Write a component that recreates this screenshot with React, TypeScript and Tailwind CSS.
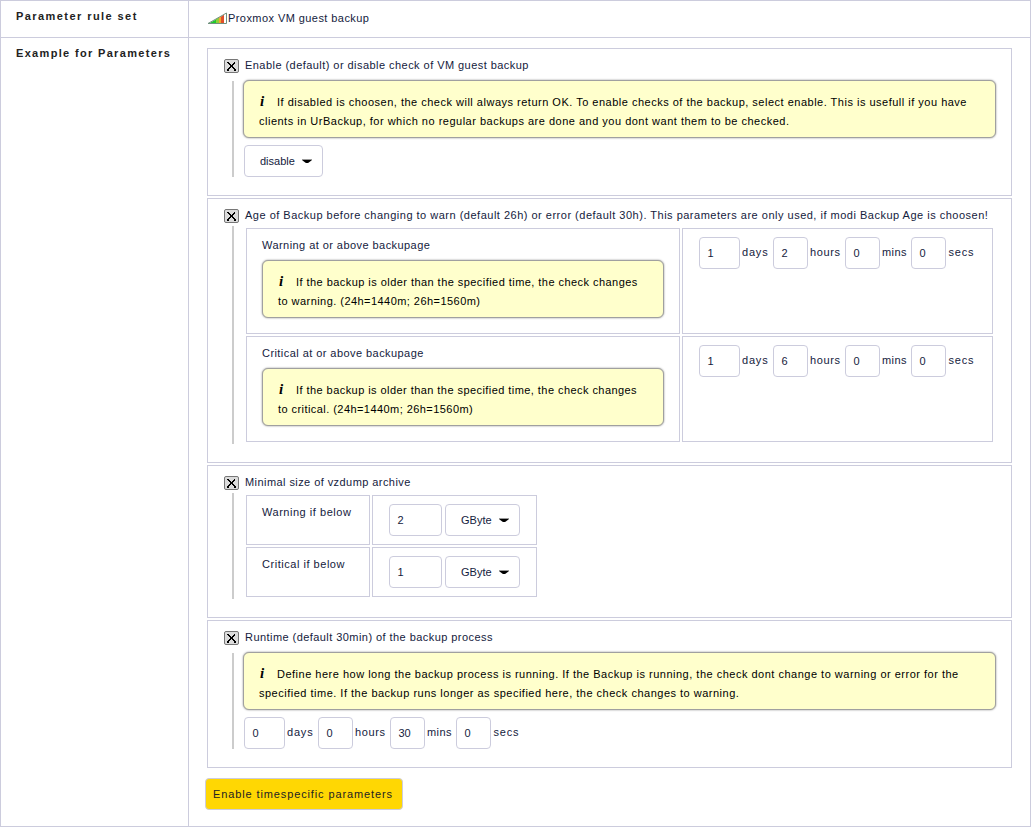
import type { ReactNode } from "react";

function Checkbox() {
  return (
    <span className="mt-[10px] flex h-[14px] w-[15px] shrink-0 items-start rounded-[2px] border border-[#777] bg-[#dcdcdc] pl-[2px] pt-[2px]">
      <svg width="9" height="9" viewBox="0 0 9 9" shapeRendering="crispEdges">
        <path d="M0 0h2v1H0zM7 0h1v1H7zM1 1h2v1H1zM6 1h2v1H6zM2 2h2v1H2zM5 2h2v1H5zM3 3h3v2H3zM2 5h2v1H2zM5 5h2v1H5zM1 6h2v1H1zM6 6h2v1H6zM0 7h2v2H0zM7 7h2v2H7z" fill="#000" />
      </svg>
    </span>
  );
}

function Group({ title, height, body, titleClass, children }: { title: string; height: string; body: string; titleClass: string; children: ReactNode }) {
  return (
    <section className={`${height} w-[805px] border border-[#ccccdd] pl-4`}>
      <div className="flex h-8 items-start">
        <Checkbox />
        <span className={`ml-[6px] mt-[8px] whitespace-nowrap leading-[16px] ${titleClass}`}>{title}</span>
      </div>
      <div className={`ml-2 flex flex-col border-l-2 border-[#cccccc] ${body}`}>{children}</div>
    </section>
  );
}

function Help({ lines, className, spacing }: { lines: [string, string]; className: string; spacing: string }) {
  return (
    <div className={`h-[58px] rounded-[6px] border border-[#a0a0a0] bg-[#ffffcc] pl-[15px] pt-[12px] text-black shadow-[0_0_2px_#888] ${className}`}>
      <div className="flex h-[19px] whitespace-nowrap leading-[19px]">
        <i className="w-[18px] shrink-0 pl-px font-['Liberation_Serif',serif] text-[15px] font-bold leading-[16px]">i</i>
        <span className={spacing}>{lines[0]}</span>
      </div>
      <div className={`h-[19px] whitespace-nowrap leading-[19px] ${spacing}`}>{lines[1]}</div>
    </div>
  );
}

function Field({ value, width }: { value: string; width: string }) {
  return <span className={`flex h-8 shrink-0 items-center rounded-[4px] border border-[#ccccdd] pl-[7.5px] tracking-normal ${width}`}>{value}</span>;
}

function Select({ value, width }: { value: string; width: string }) {
  return (
    <span className={`flex h-8 shrink-0 items-center justify-between rounded-[4px] border border-[#ccccdd] pl-[15px] pr-[9px] tracking-normal ${width}`}>
      {value}
      <svg width="12" height="5" viewBox="0 0 12 5">
        <path d="M1 0h10v1H1z" fill="#999" />
        <path d="M1 1h10L7.5 3.7Q6 4.5 4.5 3.7z" fill="#000" />
      </svg>
    </span>
  );
}

function Duration({ values }: { values: [string, string, string, string] }) {
  return (
    <div className="flex h-8 leading-[14px] tracking-[0.8px]">
      <Field value={values[0]} width="w-[41px]" />
      <span className="ml-[2px] w-[31px] pt-[8px]">days</span>
      <Field value={values[1]} width="w-[35px]" />
      <span className="ml-[2px] w-[35px] pt-[8px] tracking-[0.6px]">hours</span>
      <Field value={values[2]} width="w-[35px]" />
      <span className="ml-[2px] w-[29px] pt-[8px] tracking-[0.4px]">mins</span>
      <Field value={values[3]} width="w-[35px]" />
      <span className="ml-[2.5px] pt-[8px]">secs</span>
    </div>
  );
}

function AgeRow({ level, state, hours, spacing }: { level: string; state: string; hours: string; spacing: string }) {
  return (
    <div className="flex gap-[2px]">
      <div className="h-[106px] w-[434px] border border-[#ccccdd] pl-[15px] pt-2">
        <div className="h-[23px] leading-[16px] tracking-[0.44px]">{level} at or above backupage</div>
        <Help className="w-[402px]" spacing={spacing} lines={["If the backup is older than the specified time, the check changes", `to ${state}. (24h=1440m; 26h=1560m)`]} />
      </div>
      <div className="h-[106px] w-[311px] border border-[#ccccdd] pl-4 pt-2">
        <Duration values={["1", hours, "0", "0"]} />
      </div>
    </div>
  );
}

function SizeRow({ level, value }: { level: string; value: string }) {
  return (
    <div className="flex gap-[2px]">
      <div className="h-[50px] w-[124px] border border-[#ccccdd] pl-[15px] pt-2 leading-[16px] tracking-[0.53px]">{level} if below</div>
      <div className="flex h-[50px] w-[165px] gap-[3px] border border-[#ccccdd] pl-4 pt-2">
        <Field value={value} width="w-[53px]" />
        <Select value="GByte" width="w-[75px]" />
      </div>
    </div>
  );
}

export default function App() {
  return (
    <main className="flex h-[827px] w-[1031px] flex-col border border-[#ccccdd] bg-white font-['Liberation_Sans',Arial,sans-serif] text-[11px] text-[#14213d]">
      <div className="flex h-[37px] border-b border-[#ccccdd]">
        <div className="w-[188px] border-r border-[#ccccdd] pl-[15px] pt-[7px] font-bold leading-[16px] tracking-[1.43px] text-[#222]">Parameter rule set</div>
        <div className="flex pl-[18px] pt-[9px] leading-[16px]">
          <svg className="mt-[2px]" width="21" height="13" viewBox="0 0 21 13">
            <path d="M1 12L20 1v11z" fill="#fff" />
            <path d="M1 12L11 6.2V12z" fill="#20c92c" />
            <path d="M9 7.4L12 5.6V12H9z" fill="#8fcf36" />
            <path d="M12 5.6L14 4.5V12h-2z" fill="#f0a830" />
            <path d="M14 4.5L17 2.7V12h-3z" fill="#e0502c" />
            <path d="M1 11.5L19.5 1v10.5z" fill="none" stroke="#70917e" strokeWidth="1" />
          </svg>
          <span className="tracking-[0.43px]">Proxmox VM guest backup</span>
        </div>
      </div>
      <div className="flex flex-1">
        <div className="w-[188px] border-r border-[#ccccdd] pl-[15px] pt-[7px] font-bold leading-[16px] tracking-[1.33px] text-[#222]">Example for Parameters</div>
        <div className="flex flex-col gap-[2px] pl-[18px] pt-[10px]">
          <Group title="Enable (default) or disable check of VM guest backup" titleClass="tracking-[0.45px]" height="h-[148px]" body="h-24 pl-[9px]">
            <Help className="mb-[7px] -mt-px w-[753px]" spacing="tracking-[0.5px]" lines={["If disabled is choosen, the check will always return OK. To enable checks of the backup, select enable. This is usefull if you have", "clients in UrBackup, for which no regular backups are done and you dont want them to be checked."]} />
            <div className="pl-px"><Select value="disable" width="w-[79px]" /></div>
          </Group>
          <Group title="Age of Backup before changing to warn (default 26h) or error (default 30h). This parameters are only used, if modi Backup Age is choosen!" titleClass="tracking-[0.5px]" height="h-[265px]" body="-mt-[5px] h-[218px] pl-3 pt-[2px]">
            <div className="flex flex-col gap-[2px]">
              <AgeRow level="Warning" state="warning" hours="2" spacing="tracking-[0.45px]" />
              <AgeRow level="Critical" state="critical" hours="6" spacing="tracking-[0.44px]" />
            </div>
          </Group>
          <Group title="Minimal size of vzdump archive" titleClass="tracking-[0.43px]" height="h-[153px]" body="-mt-[5px] h-[106px] pl-3 pt-[2px]">
            <div className="flex flex-col gap-[2px]">
              <SizeRow level="Warning" value="2" />
              <SizeRow level="Critical" value="1" />
            </div>
          </Group>
          <Group title="Runtime (default 30min) of the backup process" titleClass="tracking-[0.44px]" height="h-[148px]" body="h-24 pl-[9px]">
            <Help className="mb-[7px] -mt-px w-[753px]" spacing="tracking-[0.5px]" lines={["Define here how long the backup process is running. If the Backup is running, the check dont change to warning or error for the", "specified time. If the backup runs longer as specified here, the check changes to warning."]} />
            <div className="pl-px"><Duration values={["0", "0", "30", "0"]} /></div>
          </Group>
          <button className="-ml-[2px] mt-2 h-8 w-[198px] whitespace-nowrap rounded-[4px] border border-[#ccccdd] bg-[#ffd703] pl-[7px] text-left tracking-[0.88px] text-[#222]">Enable timespecific parameters</button>
        </div>
      </div>
    </main>
  );
}
